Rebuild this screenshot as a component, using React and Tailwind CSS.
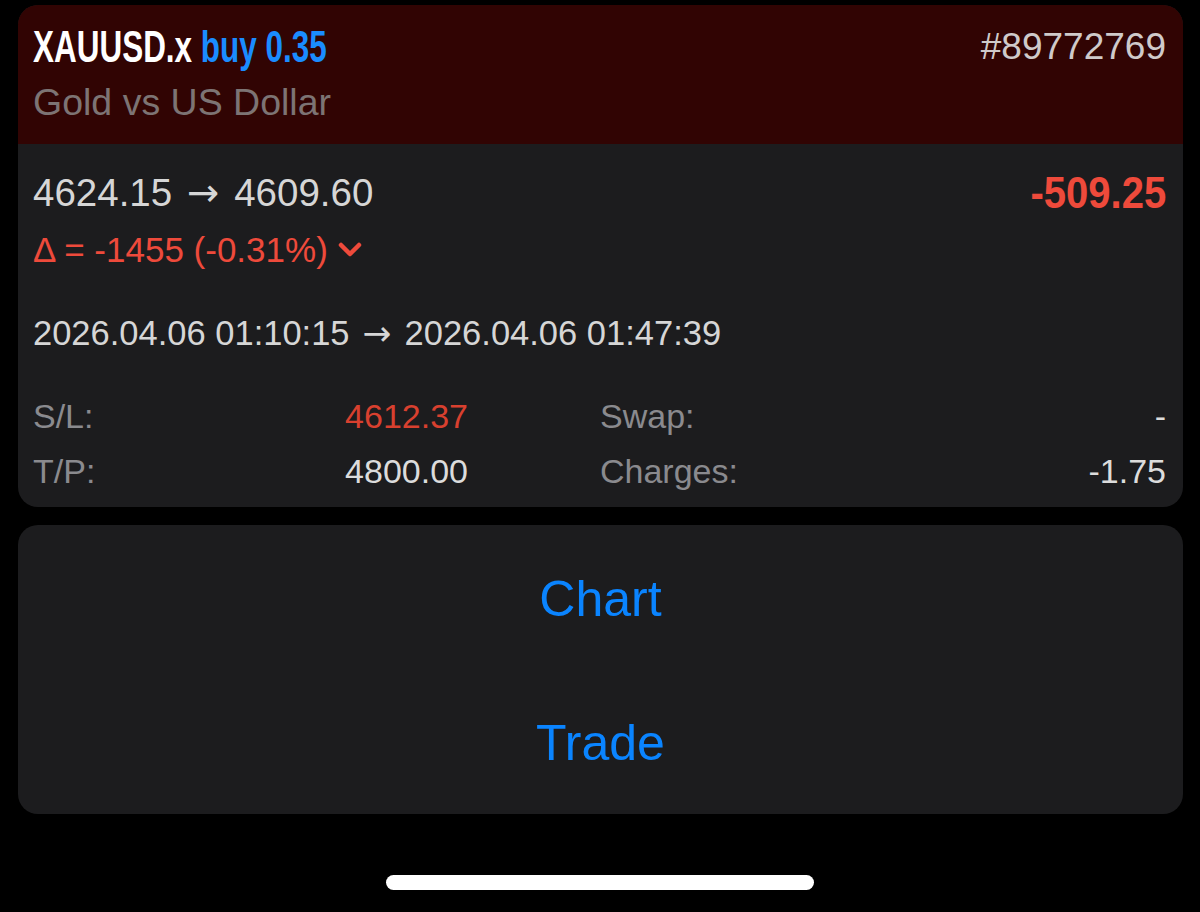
import React from 'react';

const sans = { fontFamily: '"Liberation Sans", Arial, sans-serif' };

function Arrow({ w }) {
  return (
    <span className={`inline-block text-center ${w}`} style={{ fontFamily: '"DejaVu Sans", sans-serif' }}>→</span>
  );
}

function Chevron() {
  return (
    <svg width="24" height="16" viewBox="0 0 24 16" className="ml-[10px]">
      <path d="M3 3 L12 12 L21 3" fill="none" stroke="#ee4a3b" strokeWidth="4.5" strokeLinecap="round" strokeLinejoin="round" />
    </svg>
  );
}

function Row({ label, value, valueClass, label2, value2 }) {
  return (
    <div className="flex items-center h-[55px] text-[34px]">
      <div className="w-[435px] flex justify-between">
        <span className="text-[#8a8a8e]">{label}</span>
        <span className={valueClass}>{value}</span>
      </div>
      <div className="flex-1 ml-[132px] flex justify-between">
        <span className="text-[#8a8a8e]">{label2}</span>
        <span className="text-[#dcdcdc]">{value2}</span>
      </div>
    </div>
  );
}

export default function App() {
  return (
    <div className="w-[1200px] h-[912px] bg-black flex flex-col overflow-hidden" style={sans}>
      {/* Position card */}
      <div className="mt-[5px] mx-[18px] w-[1165px] rounded-[20px] overflow-hidden bg-[#1c1c1e]">
        <div className="bg-[#310403] h-[139px] pl-[15px] pr-[17px] pt-[17px]">
          <div className="flex justify-between items-start">
            <div className="h-[50px] leading-[50px] text-[44px] font-bold whitespace-nowrap origin-left scale-x-[0.715]">
              <span className="text-white">XAUUSD.x</span>{' '}
              <span className="text-[#1a8cff]">buy 0.35</span>
            </div>
            <div className="text-[37px] leading-[50px] text-[#cfcaca]">#89772769</div>
          </div>
          <div className="text-[37.5px] leading-[50px] text-[#7d7474] mt-[5px]">Gold vs US Dollar</div>
        </div>

        <div className="pl-[15px] pr-[17px] pt-[24px] pb-[8px]">
          <div className="flex justify-between items-center h-[50px]">
            <span className="text-[38.5px] text-[#d6d6d6] whitespace-nowrap">
              4624.15<Arrow w="w-[62px]" />4609.60
            </span>
            <span className="text-[44px] font-bold text-[#ee4a3b] origin-right scale-x-[0.91]">-509.25</span>
          </div>
          <div className="flex items-center h-[60px] pt-[4px] text-[35px] text-[#ee4a3b]">
            <span>Δ = -1455 (-0.31%)</span>
            <Chevron />
          </div>
          <div className="h-[111px] flex items-center text-[34.5px] text-[#d6d6d6]">
            <span className="whitespace-nowrap">
              2026.04.06 01:10:15<Arrow w="w-[55px]" />2026.04.06 01:47:39
            </span>
          </div>
          <Row label="S/L:" value="4612.37" valueClass="text-[#d8402f]" label2="Swap:" value2="-" />
          <Row label="T/P:" value="4800.00" valueClass="text-[#dcdcdc]" label2="Charges:" value2="-1.75" />
        </div>
      </div>

      {/* Actions */}
      <div className="mt-[18px] mx-[18px] w-[1165px] h-[289px] rounded-[20px] bg-[#1c1c1e] flex flex-col">
        <button className="flex-1 pt-[4px] text-[50px] text-[#0a84ff]">Chart</button>
        <button className="flex-1 pt-[4px] text-[50px] text-[#0a84ff]">Trade</button>
      </div>

      {/* Home indicator */}
      <div className="flex-1 flex justify-center pt-[61px]">
        <div className="w-[428px] h-[15px] rounded-full bg-white" />
      </div>
    </div>
  );
}
